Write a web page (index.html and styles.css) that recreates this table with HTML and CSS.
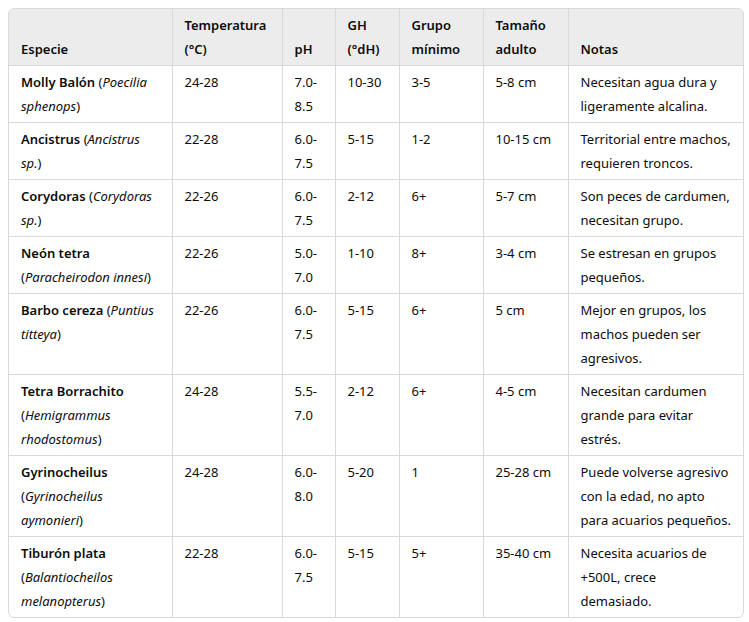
FILE: index.html
```html
<!DOCTYPE html>
<html lang="es">
<head>
<meta charset="utf-8">
<title>Peces</title>
<link rel="stylesheet" href="styles.css">
</head>
<body>
<div class="wrap">
<table class="fish">
  <colgroup>
    <col class="c1"><col class="c2"><col class="c3"><col class="c4"><col class="c5"><col class="c6"><col class="c7">
  </colgroup>
  <thead>
    <tr>
      <th>Especie</th>
      <th>Temperatura<br>(°C)</th>
      <th>pH</th>
      <th>GH<br>(°dH)</th>
      <th>Grupo<br>mínimo</th>
      <th>Tamaño<br>adulto</th>
      <th>Notas</th>
    </tr>
  </thead>
  <tbody>
    <tr>
      <td><strong>Molly Balón</strong> (<em>Poecilia<br>sphenops</em>)</td>
      <td>24-28</td><td>7.0-<br>8.5</td><td>10-30</td><td>3-5</td><td>5-8 cm</td>
      <td>Necesitan agua dura y<br>ligeramente alcalina.</td>
    </tr>
    <tr>
      <td><strong>Ancistrus</strong> (<em>Ancistrus<br>sp.</em>)</td>
      <td>22-28</td><td>6.0-<br>7.5</td><td>5-15</td><td>1-2</td><td>10-15 cm</td>
      <td>Territorial entre machos,<br>requieren troncos.</td>
    </tr>
    <tr>
      <td><strong>Corydoras</strong> (<em>Corydoras<br>sp.</em>)</td>
      <td>22-26</td><td>6.0-<br>7.5</td><td>2-12</td><td>6+</td><td>5-7 cm</td>
      <td>Son peces de cardumen,<br>necesitan grupo.</td>
    </tr>
    <tr>
      <td><strong>Neón tetra</strong><br>(<em>Paracheirodon innesi</em>)</td>
      <td>22-26</td><td>5.0-<br>7.0</td><td>1-10</td><td>8+</td><td>3-4 cm</td>
      <td>Se estresan en grupos<br>pequeños.</td>
    </tr>
    <tr>
      <td><strong>Barbo cereza</strong> (<em>Puntius<br>titteya</em>)</td>
      <td>22-26</td><td>6.0-<br>7.5</td><td>5-15</td><td>6+</td><td>5 cm</td>
      <td>Mejor en grupos, los<br>machos pueden ser<br>agresivos.</td>
    </tr>
    <tr>
      <td><strong>Tetra Borrachito</strong><br>(<em>Hemigrammus<br>rhodostomus</em>)</td>
      <td>24-28</td><td>5.5-<br>7.0</td><td>2-12</td><td>6+</td><td>4-5 cm</td>
      <td>Necesitan cardumen<br>grande para evitar<br>estrés.</td>
    </tr>
    <tr>
      <td><strong>Gyrinocheilus</strong><br>(<em>Gyrinocheilus<br>aymonieri</em>)</td>
      <td>24-28</td><td>6.0-<br>8.0</td><td>5-20</td><td>1</td><td>25-28 cm</td>
      <td>Puede volverse agresivo<br>con la edad, no apto<br>para acuarios pequeños.</td>
    </tr>
    <tr>
      <td><strong>Tiburón plata</strong><br>(<em>Balantiocheilos<br>melanopterus</em>)</td>
      <td>22-28</td><td>6.0-<br>7.5</td><td>5-15</td><td>5+</td><td>35-40 cm</td>
      <td>Necesita acuarios de<br>+500L, crece<br>demasiado.</td>
    </tr>
  </tbody>
</table>
</div>
</body>
</html>
```
FILE: styles.css
```css
html, body {
  margin: 0;
  padding: 0;
  background: #ffffff;
}
body {
  padding: 8px;
  font-family: "Noto Sans", "Open Sans", sans-serif;
  font-size: 13px;
  color: #0d0d0d;
}
.wrap {
  width: 734px;
  border: 1px solid #d9d9d9;
  border-radius: 6px;
  overflow: hidden;
}
.fish {
  width: 100%;
  table-layout: fixed;
  border-collapse: collapse;
  line-height: 24px;
}
.c1 { width: 163px; }
.c2 { width: 110px; }
.c3 { width: 53px; }
.c4 { width: 64px; }
.c5 { width: 84px; }
.c6 { width: 85px; }
.c7 { width: auto; }
.fish th,
.fish td {
  padding: 4px 12px;
  text-align: left;
  border-right: 1px solid #d9d9d9;
  border-bottom: 1px solid #d9d9d9;
  white-space: nowrap;
}
.fish th:last-child,
.fish td:last-child {
  border-right: none;
}
.fish tbody tr:last-child td {
  border-bottom: none;
}
.fish th {
  background: #ececec;
  font-weight: 600;
  vertical-align: bottom;
}
.fish td {
  vertical-align: top;
}
.fish strong {
  font-weight: 600;
}
```
